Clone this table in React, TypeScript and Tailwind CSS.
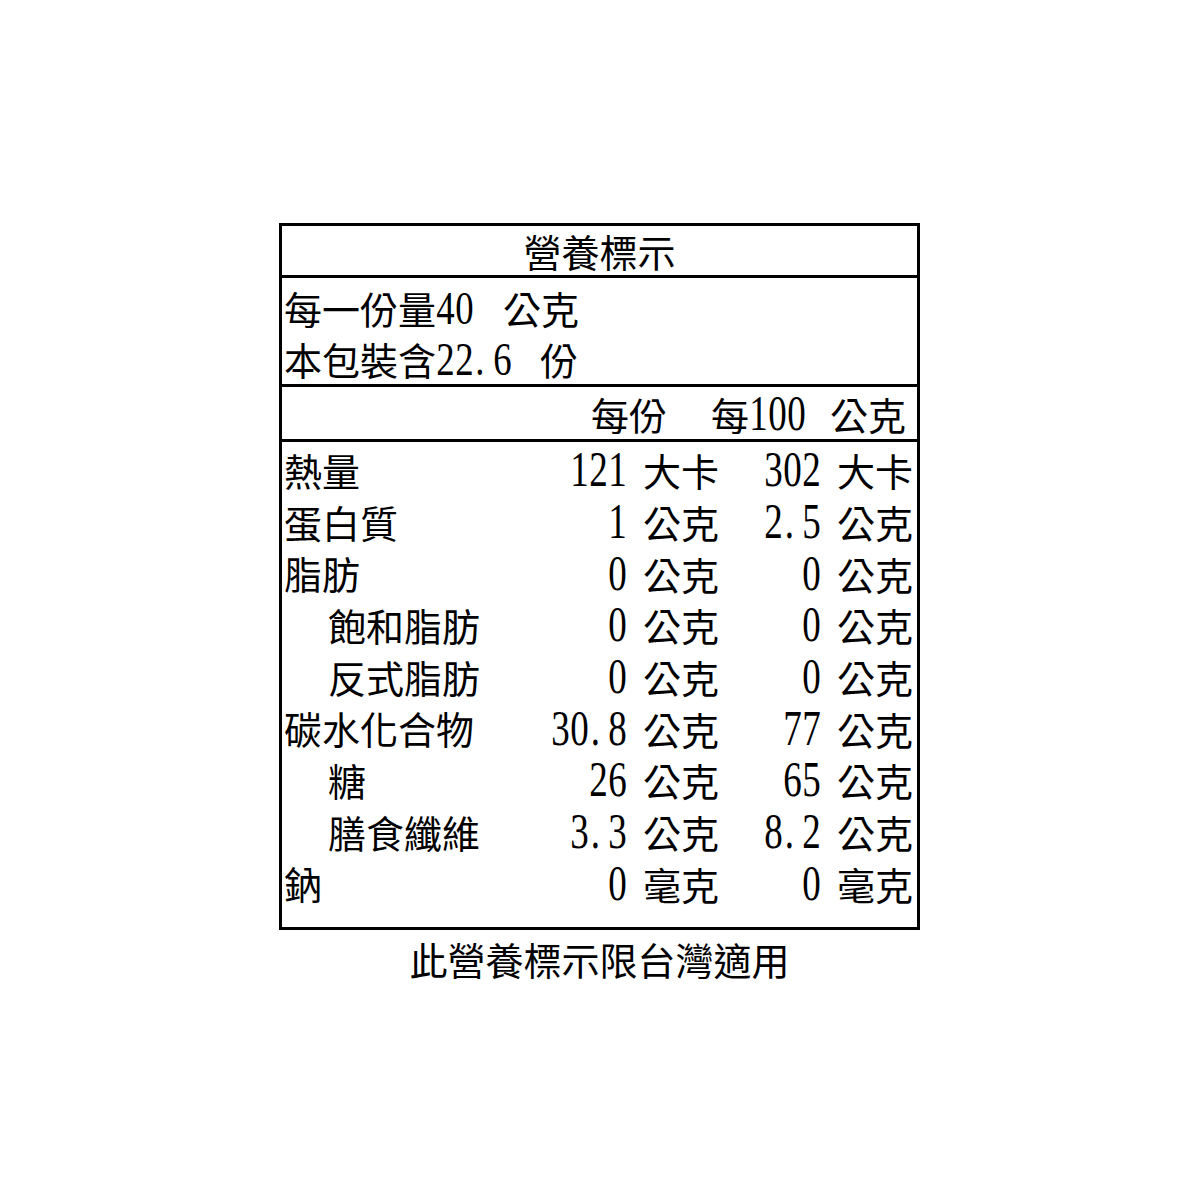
const rows = [
  { label: "熱量", a: "121", au: "大卡", b: "302", bu: "大卡" },
  { label: "蛋白質", a: "1", au: "公克", b: "2.5", bu: "公克" },
  { label: "脂肪", a: "0", au: "公克", b: "0", bu: "公克" },
  { label: "飽和脂肪", sub: true, a: "0", au: "公克", b: "0", bu: "公克" },
  { label: "反式脂肪", sub: true, a: "0", au: "公克", b: "0", bu: "公克" },
  { label: "碳水化合物", a: "30.8", au: "公克", b: "77", bu: "公克" },
  { label: "糖", sub: true, a: "26", au: "公克", b: "65", bu: "公克" },
  { label: "膳食纖維", sub: true, a: "3.3", au: "公克", b: "8.2", bu: "公克" },
  { label: "鈉", a: "0", au: "毫克", b: "0", bu: "毫克" },
];

// half-width digits, tall and narrow like the printed label
function Num({ value, small }: { value: string; small?: boolean }) {
  return (
    <span className="inline-flex items-baseline">
      {value.split("").map((ch, i) => (
        <span
          key={i}
          className={`inline-flex w-[19px] font-['Liberation_Serif',serif] leading-[38px] ${
            small ? "text-[46px]" : "text-[50px]"
          } ${ch === "." ? "justify-start" : "justify-center"}`}
        >
          <span className={`inline-block ${small ? "scale-x-[0.8]" : "scale-x-[0.74]"}`}>{ch}</span>
        </span>
      ))}
    </span>
  );
}

function Amount({ value, unit, className }: { value: string; unit: string; className: string }) {
  return (
    <div className={`flex items-baseline justify-end ${className}`}>
      <Num value={value} />
      <span className="ml-[16px]">{unit}</span>
    </div>
  );
}

export default function App() {
  return (
    <div className="min-h-[1200px] bg-white pt-[223px] font-['Noto_Sans_CJK_TC',sans-serif] text-[38px] leading-none text-black">
      <div className="ml-[279px] w-[641px]">
        <div className="border-[3px] border-black">
          <div className="flex h-[52px] items-center justify-center border-b-[3px] border-black">營養標示</div>

          <div className="h-[109px] border-b-[3px] border-black pl-[2px] pt-[5px]">
            <div className="flex h-[51px] items-center">
              <div className="flex items-baseline">
                <span>每一份量</span>
                <Num value="40" small />
                <span className="ml-[29px]">公克</span>
              </div>
            </div>
            <div className="flex h-[51px] items-center">
              <div className="flex items-baseline">
                <span>本包裝含</span>
                <Num value="22.6" small />
                <span className="ml-[28px]">份</span>
              </div>
            </div>
          </div>

          <div className="flex h-[55px] items-center justify-end border-b-[3px] border-black pr-[11px]">
            <div className="flex items-baseline">
              <span>每份</span>
              <span className="ml-[44px]">每</span>
              <Num value="100" />
              <span className="ml-[24px]">公克</span>
            </div>
          </div>

          <div className="h-[485px] pl-[2px] pr-[4px] pt-[2px]">
            {rows.map((r) => (
              <div key={r.label} className="flex h-[51.7px] items-center">
                <div className={`flex-1 ${r.sub ? "pl-[44px]" : ""}`}>{r.label}</div>
                <Amount value={r.a} unit={r.au} className="w-[200px]" />
                <Amount value={r.b} unit={r.bu} className="w-[194px]" />
              </div>
            ))}
          </div>
        </div>

        <div className="mt-[10px] text-center">此營養標示限台灣適用</div>
      </div>
    </div>
  );
}
